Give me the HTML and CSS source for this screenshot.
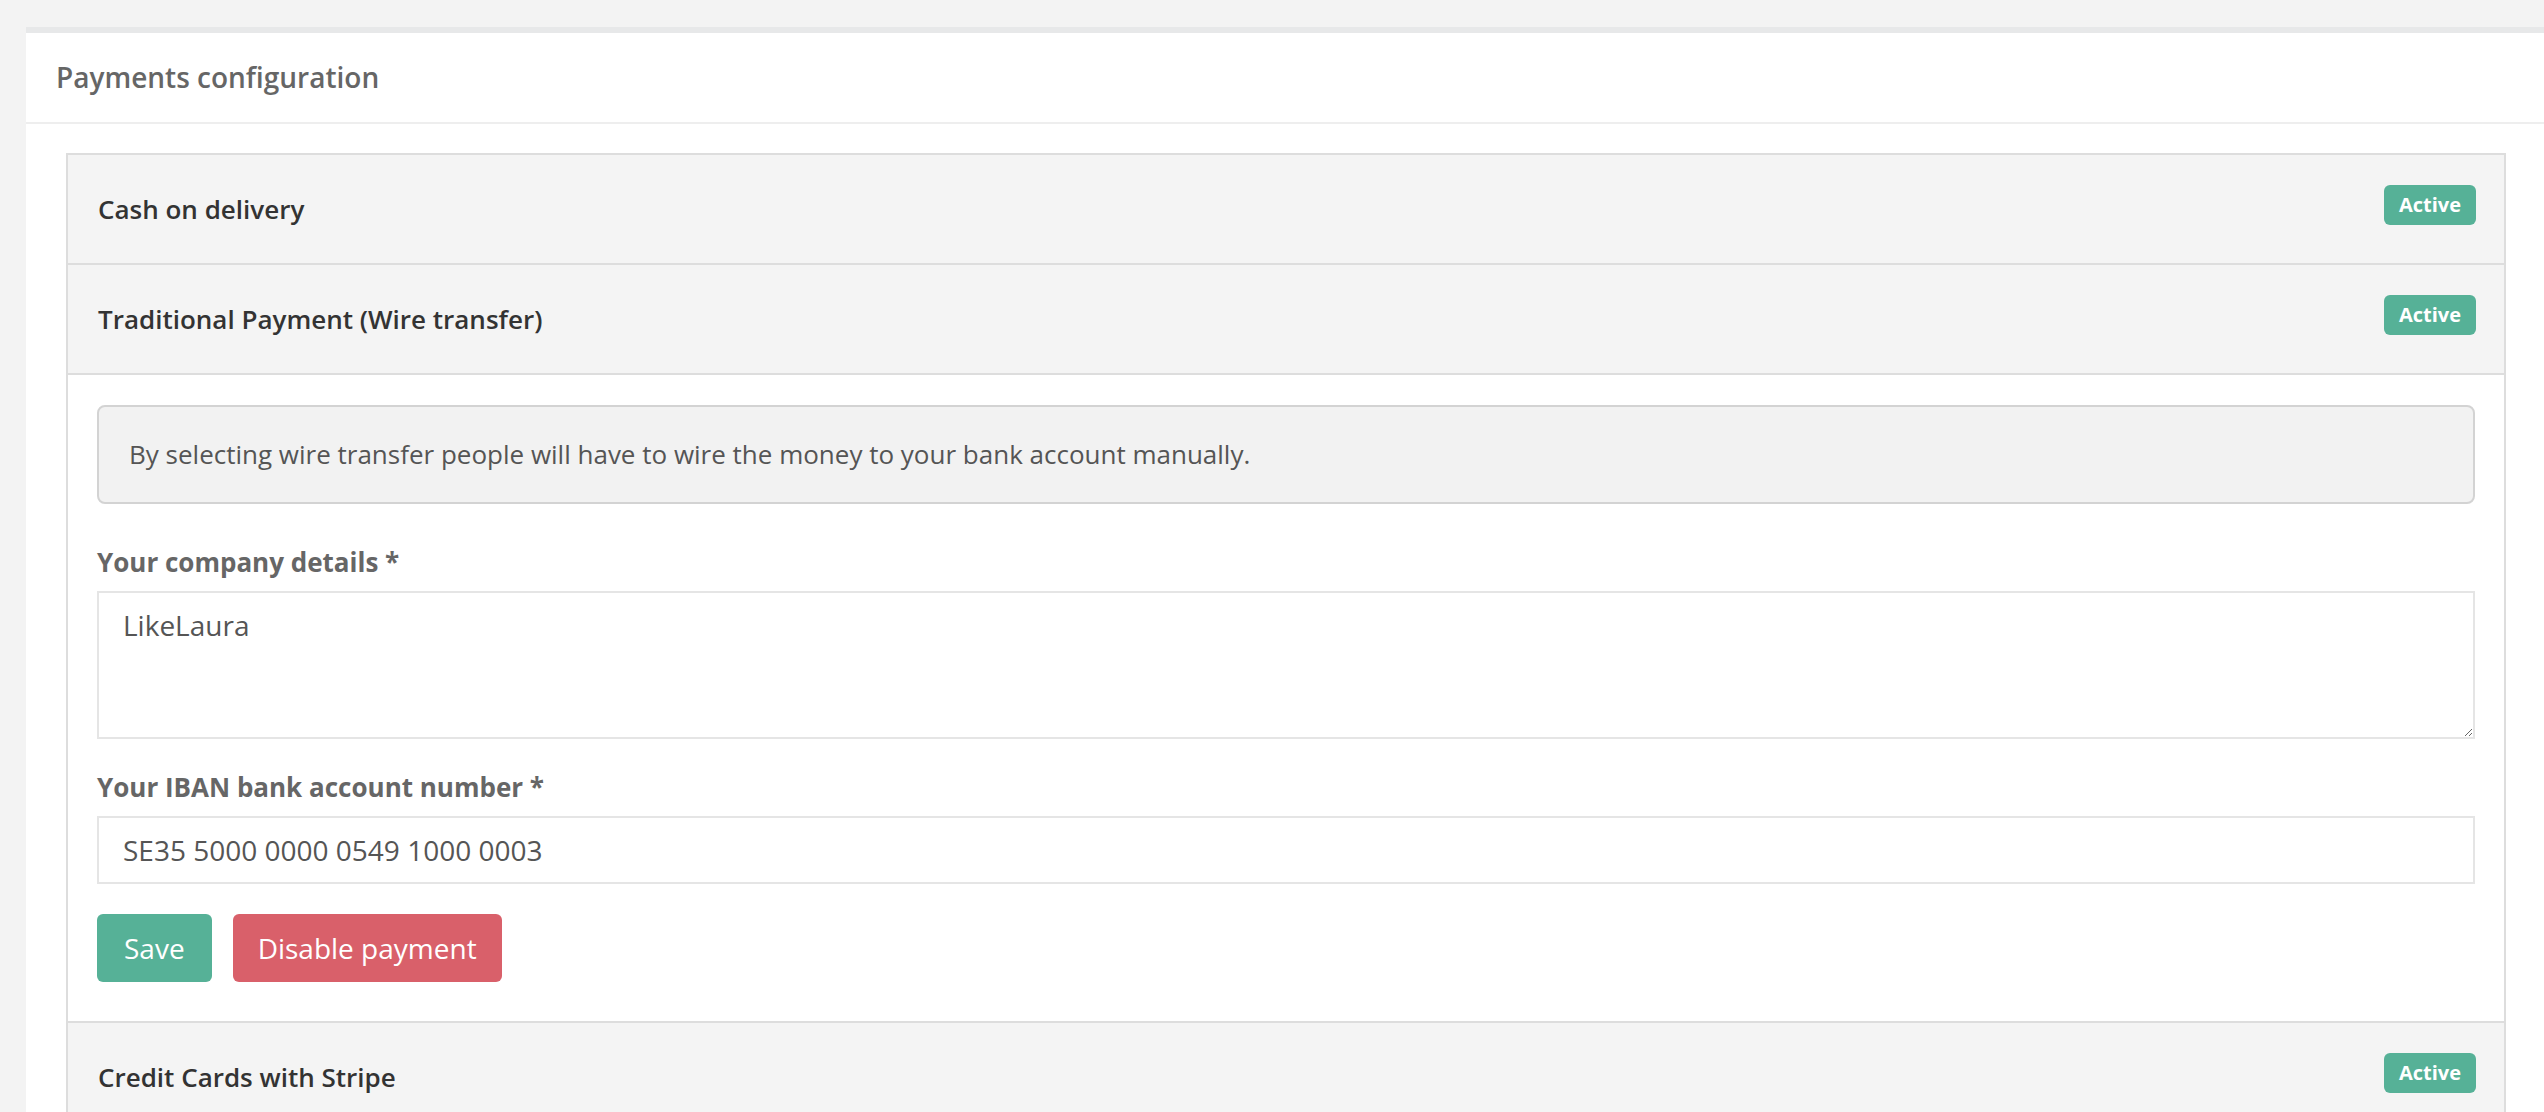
FILE: index.html
```html
<!DOCTYPE html>
<html lang="en">
<head>
    <meta charset="UTF-8">
    <meta name="viewport" content="width=device-width, initial-scale=1.0">
    <title>Payments configuration</title>
    <link rel="stylesheet" href="styles.css">
</head>
<body>
    <div class="panel">
        <div class="panel-heading">Payments configuration</div>
        <div class="panel-body">
            <div class="accordion">
                <div class="method">
                    <div class="method-head">
                        <span class="method-title">Cash on delivery</span>
                        <span class="badge">Active</span>
                    </div>
                </div>
                <div class="method open">
                    <div class="method-head">
                        <span class="method-title">Traditional Payment (Wire transfer)</span>
                        <span class="badge">Active</span>
                    </div>
                    <div class="method-body">
                        <div class="alert">By selecting wire transfer people will have to wire the money to your bank account manually.</div>
                        <div class="form-group">
                            <label for="companyDetails">Your company details *</label>
                            <textarea id="companyDetails" rows="3">LikeLaura</textarea>
                        </div>
                        <div class="form-group">
                            <label for="iban">Your IBAN bank account number *</label>
                            <input type="text" id="iban" value="SE35 5000 0000 0549 1000 0003">
                        </div>
                        <div class="actions">
                            <button class="btn btn-save">Save</button>
                            <button class="btn btn-disable">Disable payment</button>
                        </div>
                    </div>
                </div>
                <div class="method">
                    <div class="method-head">
                        <span class="method-title">Credit Cards with Stripe</span>
                        <span class="badge">Active</span>
                    </div>
                </div>
            </div>
        </div>
    </div>
</body>
</html>
```

FILE: styles.css
```css
html, body {
    overflow: hidden;
}

body {
    margin: 0;
    padding: 27px 0 0 26px;
    background-color: #f3f3f3;
    font-family: 'Open Sans', sans-serif;
    color: #555;
}

.panel {
    background-color: #fff;
    border-top: 6px solid #e7e8e9;
    margin-right: -2px;
}

.panel-heading {
    padding: 25px 30px 25px 30px;
    line-height: 39px;
    font-size: 28px;
    font-weight: 600;
    color: #666;
    border-bottom: 2px solid #eee;
}

.panel-body {
    padding: 29px 40px 40px 40px;
}

.accordion {
    border: 2px solid #ddd;
}

.method + .method {
    border-top: 2px solid #ddd;
}

.method-head {
    display: flex;
    align-items: center;
    justify-content: space-between;
    padding: 36px 28px 36px 30px;
    background-color: #f4f4f4;
}

.method-title {
    font-size: 26px;
    line-height: 36px;
    font-weight: 600;
    color: #333;
}

.badge {
    margin-top: -8px;
    padding: 0 15px;
    line-height: 40px;
    font-size: 20px;
    font-weight: 700;
    color: #fff;
    background-color: #56b197;
    border-radius: 6px;
}

.method-body {
    border-top: 2px solid #ddd;
    padding: 30px 29px 39px 29px;
}

.alert {
    padding: 29px 30px;
    margin-bottom: 40px;
    line-height: 37px;
    font-size: 26px;
    color: #555;
    background-color: #f2f2f2;
    border: 2px solid #d3d3d3;
    border-radius: 8px;
}

.form-group {
    margin-bottom: 30px;
}

.form-group label {
    display: block;
    margin-bottom: 10px;
    line-height: 37px;
    font-size: 26px;
    font-weight: 700;
    color: #666;
}

.form-group textarea,
.form-group input {
    display: block;
    box-sizing: border-box;
    width: 100%;
    padding: 12px 24px;
    font-family: 'Open Sans', sans-serif;
    font-size: 28px;
    line-height: 40px;
    color: #555;
    background-color: #fff;
    border: 2px solid #e5e5e5;
    border-radius: 0;
    outline: none;
    margin: 0;
}

.form-group textarea {
    height: 148px;
    resize: vertical;
}

.form-group input {
    height: 68px;
}

.actions {
    display: flex;
    gap: 21px;
}

.btn {
    height: 68px;
    padding: 0 27px;
    font-family: 'Open Sans', sans-serif;
    font-size: 28px;
    color: #fff;
    border: none;
    border-radius: 6px;
    cursor: pointer;
}

.btn-save {
    background-color: #56b197;
}

.btn-disable {
    background-color: #d9606a;
    padding: 0 25px;
}
```
